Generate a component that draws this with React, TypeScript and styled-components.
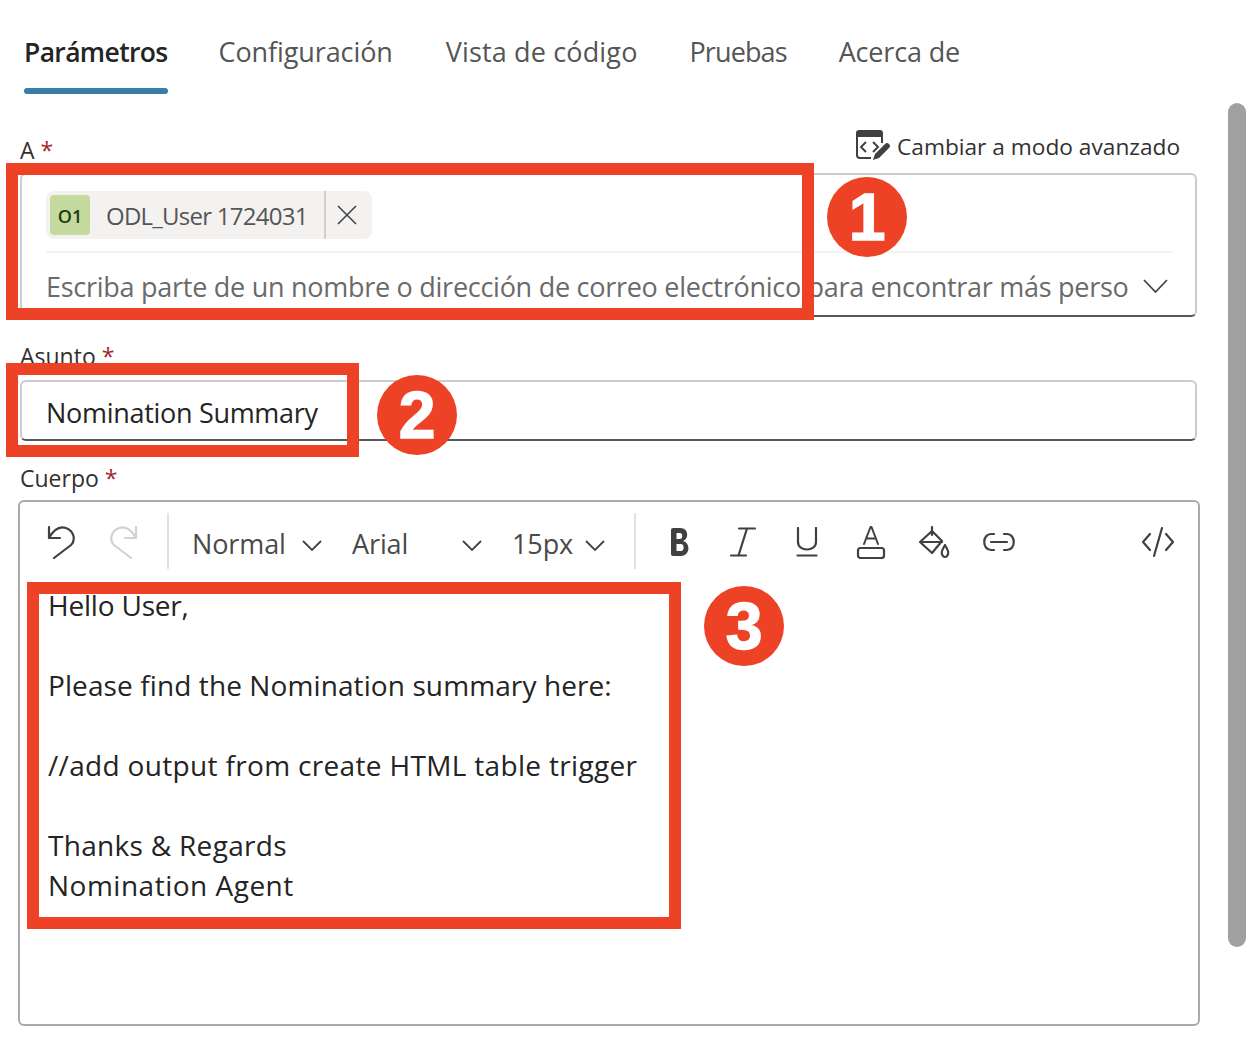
import React from "react";
import styled, { createGlobalStyle } from "styled-components";

const Global = createGlobalStyle`
  html, body { margin: 0; padding: 0; background: #fff; }
  body { font-family: "Open Sans", "Noto Sans", sans-serif; color: #323130; overflow: hidden; }
`;
const Page = styled.div`
  position: relative; width: 1250px; height: 1060px; display: flex; overflow: hidden; background: #fff;
`;
const Main = styled.div`width: 1200px; padding-left: 20px; box-sizing: border-box;`;
const ScrollThumb = styled.div`
  width: 18px; height: 844px; margin: 103px 0 0 28px; background: #a0a0a0; border-radius: 9px;
`;
const Tabs = styled.div`display: flex; height: 94px; padding-left: 4px;`;
const Tab = styled.div<{ $active?: boolean; $gap: number; $ls: number }>`
  position: relative; margin-right: ${p => p.$gap}px; padding-top: 32px; height: 62px;
  font-size: ${p => (p.$active ? 26.5 : 27)}px; line-height: 40px; white-space: nowrap;
  font-weight: ${p => (p.$active ? 600 : 400)};
  letter-spacing: ${p => p.$ls}px;
  color: ${p => (p.$active ? "#242424" : "#555")};
  ${p => p.$active && `&::after { content: ""; position: absolute; left: 0; right: 0; bottom: 0; height: 6px; border-radius: 3px; background: #367da9; }`}
`;
const HeadRow = styled.div`
  display: flex; justify-content: space-between; align-items: flex-end; width: 1177px; height: 79px;
`;
const Label = styled.div`
  font-size: 23px; line-height: 30px; color: #323130; height: 30px; white-space: nowrap;
`;
const FirstLabel = styled(Label)`margin-bottom: 8px;`;
const Star = styled.span`color: #a4262c; margin-left: 6px;`;
const Advanced = styled.div`
  display: flex; align-items: center; gap: 7px; width: 325px; height: 34px; margin: 0 17px 10px 0;
  font-size: 22.7px; color: #323130; white-space: nowrap; box-sizing: border-box;
`;
const PeopleBox = styled.div`
  width: 1177px; height: 144px; box-sizing: border-box; border: 2px solid #ccc; border-bottom-color: #575757;
  border-radius: 6px; padding: 16px 24px 0 24px; background: #fff;
`;
const Chip = styled.div`
  display: inline-flex; align-items: center; height: 48px; width: 326px; box-sizing: border-box; background: #f3f2f1;
  border-radius: 8px; padding-left: 4px;
`;
const Avatar = styled.div`
  width: 40px; height: 40px; padding-top: 2px; box-sizing: border-box; border-radius: 4px; background: #c5da9f; color: #23390c;
  display: flex; align-items: center; justify-content: center; font-size: 18px; font-weight: 600;
`;
const ChipName = styled.div`
  margin-left: 16px; width: 218px; font-size: 24px; color: #555; white-space: nowrap; letter-spacing: -0.75px;
`;
const ChipClose = styled.div`
  width: 47px; height: 48px; padding-right: 4px; box-sizing: border-box; border-left: 2px solid #d2d0ce;
  display: flex; align-items: center; justify-content: center;
`;
const PeopleRule = styled.div`height: 2px; background: #f3f2f1; margin-top: 12px; width: 1126px;`;
const SearchRow = styled.div`display: flex; align-items: center; height: 63px; width: 1126px; padding-top: 4px; box-sizing: border-box;`;
const Placeholder = styled.div`
  width: 1082px; overflow: hidden; white-space: nowrap; font-size: 27px; color: #6a6a6a; letter-spacing: -0.27px;
`;
const Arrow = styled.div`margin-left: 15px; display: flex;`;
const SubjectLabel = styled(Label)`margin-top: 24px;`;
const SubjectBox = styled.div`
  width: 1177px; height: 61px; box-sizing: border-box; border: 2px solid #ccc; border-bottom-color: #575757;
  border-radius: 6px; margin-top: 9px; padding: 4px 24px 0 24px; display: flex; align-items: center;
  font-size: 27px; color: #242424; letter-spacing: -0.3px; white-space: nowrap;
`;
const BodyLabel = styled(Label)`margin-top: 22px;`;
const Editor = styled.div`
  width: 1182px; height: 526px; margin: 7px 0 0 -2px; box-sizing: border-box; border: 2px solid #aaa; border-radius: 6px;
`;
const Toolbar = styled.div`display: flex; align-items: center; height: 68px; padding-top: 12px; box-sizing: border-box; position: relative;`;
const Divider = styled.div`width: 2px; height: 56px; background: #e1e1e1; flex: none; margin-top: -2px;`;
const Select = styled.div<{ $w: number }>`
  width: ${p => p.$w}px; display: flex; justify-content: space-between; align-items: center; flex: none; padding-top: 2px;
  font-size: 27px; color: #4a4a4a; white-space: nowrap; letter-spacing: -0.1px;
`;
const SelectArrow = styled.span`display: flex; margin-top: 5px;`;
const IconSlot = styled.div<{ $w: number; $ml: number }>`
  width: ${p => p.$w}px; margin-left: ${p => p.$ml}px; flex: none; display: flex; justify-content: center; align-items: center;
`;
const Content = styled.div`
  padding: 83px 0 0 28px; margin-top: -68px; font-size: 28px; line-height: 40px; color: #242424;
`;
const Line = styled.div<{ $ls?: number }>`height: 40px; white-space: nowrap; letter-spacing: ${p => p.$ls ?? 0}px;`;
const Frame = styled.div<{ $l: number; $t: number; $w: number; $h: number }>`
  position: absolute; left: ${p => p.$l}px; top: ${p => p.$t}px; width: ${p => p.$w}px; height: ${p => p.$h}px;
  box-sizing: border-box; border: 12px solid #ee4227; pointer-events: none;
`;
const Badge = styled.div<{ $l: number; $t: number }>`
  position: absolute; left: ${p => p.$l}px; top: ${p => p.$t}px; width: 80px; height: 80px; border-radius: 50%;
  background: #ee4227; color: #fff; display: flex; align-items: center; justify-content: center;
  font-family: "Liberation Sans", sans-serif; font-weight: 700; font-size: 66px; -webkit-text-stroke: 1.5px #fff;
`;

const S = { fill: "none", stroke: "#404040", strokeWidth: 2.2, strokeLinecap: "round", strokeLinejoin: "round" } as const;

const Chevron = ({ w = 20, h = 10, c = "#444" }: { w?: number; h?: number; c?: string }) => (
  <svg width={w} height={h + 2} viewBox={`0 0 ${w} ${h + 2}`}>
    <path d={`M1 1 L${w / 2} ${h} L${w - 1} 1`} fill="none" stroke={c} strokeWidth="1.8" />
  </svg>
);

const App = () => (
  <Page>
    <Global />
    <Main>
      <Tabs>
        <Tab $active $gap={51} $ls={-0.65}>Parámetros</Tab>
        <Tab $gap={53} $ls={-0.1}>Configuración</Tab>
        <Tab $gap={52} $ls={0.15}>Vista de código</Tab>
        <Tab $gap={52} $ls={-0.9}>Pruebas</Tab>
        <Tab $gap={0} $ls={-0.15}>Acerca de</Tab>
      </Tabs>
      <HeadRow>
        <FirstLabel>A<Star>*</Star></FirstLabel>
        <Advanced>
          <svg width="35" height="34" viewBox="0 0 35 34" style={{ flex: "none" }}>
            <path d="M4 1 H25 A3 3 0 0 1 28 4 V8 H1 V4 A3 3 0 0 1 4 1 Z" fill="#404040" />
            <path d="M2 6 V26 A3 3 0 0 0 5 29 H16 M27 6 V14" fill="none" stroke="#404040" strokeWidth="2" />
            <path d="M11 13 L6 18 L11 23 M18 13 L23 18 L18 23" fill="none" stroke="#404040" strokeWidth="2" />
            <path d="M18 31 L20 25 L30 15 A2.8 2.8 0 0 1 34 19 L24 29 Z" fill="#404040" />
          </svg>
          Cambiar a modo avanzado
        </Advanced>
      </HeadRow>
      <PeopleBox>
        <Chip>
          <Avatar>O1</Avatar>
          <ChipName>ODL_User 1724031</ChipName>
          <ChipClose>
            <svg width="22" height="22" viewBox="0 0 22 22">
              <path d="M2 2 L20 20 M20 2 L2 20" stroke="#444" strokeWidth="1.6" />
            </svg>
          </ChipClose>
        </Chip>
        <PeopleRule />
        <SearchRow>
          <Placeholder>Escriba parte de un nombre o dirección de correo electrónico para encontrar más personas</Placeholder>
          <Arrow><Chevron w={25} h={13} /></Arrow>
        </SearchRow>
      </PeopleBox>
      <SubjectLabel>Asunto<Star>*</Star></SubjectLabel>
      <SubjectBox>Nomination Summary</SubjectBox>
      <BodyLabel>Cuerpo<Star>*</Star></BodyLabel>
      <Editor>
        <Toolbar>
          <IconSlot $w={30} $ml={26}>
            <svg width="30" height="34" viewBox="0 0 30 34">
              <path d="M3 2 V13 H14 M3 13 C8 4 14 1 20 3 C28 6 30 15 25 20 L8 33" {...S} />
            </svg>
          </IconSlot>
          <IconSlot $w={30} $ml={33}>
            <svg width="30" height="34" viewBox="0 0 30 34">
              <path d="M27 2 V13 H16 M27 13 C22 4 16 1 10 3 C2 6 0 15 5 20 L22 33" {...S} stroke="#d2d2d2" />
            </svg>
          </IconSlot>
          <IconSlot $w={2} $ml={28}><Divider /></IconSlot>
          <IconSlot $w={130} $ml={23}>
            <Select $w={130}>Normal <SelectArrow><Chevron /></SelectArrow></Select>
          </IconSlot>
          <IconSlot $w={130} $ml={30}>
            <Select $w={130}>Arial <SelectArrow><Chevron /></SelectArrow></Select>
          </IconSlot>
          <IconSlot $w={93} $ml={30}>
            <Select $w={93}>15px <SelectArrow><Chevron /></SelectArrow></Select>
          </IconSlot>
          <IconSlot $w={2} $ml={29}><Divider /></IconSlot>
          <IconSlot $w={20} $ml={34}>
            <svg width="20" height="30" viewBox="0 0 20 30">
              <path d="M3 1 H10 C19 1 19 12 13 14 C21 16 20 29 11 29 H3 A2 2 0 0 1 1 27 V3 A2 2 0 0 1 3 1 Z M6.500 6 V12 H10 C13 12 13 6 10 6 Z M6.500 17 V24 H11 C14.500 24 14.500 17 11 17 Z" fill="#404040" fillRule="evenodd" />
            </svg>
          </IconSlot>
          <IconSlot $w={28} $ml={39}>
            <svg width="28" height="30" viewBox="0 0 28 30">
              <path d="M10 1.500 H26 M2 28.500 H17 M18 1.500 L9.500 28.500" {...S} />
            </svg>
          </IconSlot>
          <IconSlot $w={22} $ml={39}>
            <svg width="22" height="30" viewBox="0 0 22 30">
              <path d="M2 1 V15 C2 25 20 25 20 15 V1 M1.500 28.500 H20.500" {...S} />
            </svg>
          </IconSlot>
          <IconSlot $w={30} $ml={38}>
            <svg width="30" height="34" viewBox="0 0 30 34">
              <path d="M8 19 L14.500 2 H15.500 L22 19 M10 13.500 H20" {...S} strokeWidth="2" />
              <rect x="2" y="23" width="26" height="10" rx="2.500" {...S} />
            </svg>
          </IconSlot>
          <IconSlot $w={34} $ml={32}>
            <svg width="34" height="34" viewBox="0 0 34 34">
              <path d="M14 2 V10 M14 6 L24 16 L14 28 L2 17 Z M2.500 17 H24" {...S} />
              <path d="M27 20 C24 25 23 27 24 29 C25 33 29 33 30 29 C31 27 30 25 27 20 Z" {...S} />
            </svg>
          </IconSlot>
          <IconSlot $w={34} $ml={30}>
            <svg width="34" height="20" viewBox="0 0 34 20">
              <path d="M12 2 H9 C0 2 0 18 9 18 H12 M22 2 H25 C34 2 34 18 25 18 H22 M9 10 H25" {...S} />
            </svg>
          </IconSlot>
          <IconSlot $w={34} $ml={125}>
            <svg width="34" height="32" viewBox="0 0 34 32">
              <path d="M9 8 L2 16 L9 24 M25 8 L32 16 L25 24 M21 2 L13 30" {...S} />
            </svg>
          </IconSlot>
        </Toolbar>
        <Content>
          <Line $ls={-0.2}>Hello User,</Line>
          <Line />
          <Line $ls={0.1}>Please find the Nomination summary here:</Line>
          <Line />
          <Line $ls={0.33}>//add output from create HTML table trigger</Line>
          <Line />
          <Line $ls={0.3}>Thanks &amp; Regards</Line>
          <Line $ls={0.5}>Nomination Agent</Line>
        </Content>
      </Editor>
    </Main>
    <ScrollThumb />
    <Frame $l={6} $t={163} $w={808} $h={157} />
    <Frame $l={6} $t={363} $w={353} $h={94} />
    <Frame $l={27} $t={582} $w={654} $h={347} />
    <Badge $l={827} $t={177}>1</Badge>
    <Badge $l={377} $t={375}>2</Badge>
    <Badge $l={704} $t={586}>3</Badge>
  </Page>
);

export default App;
